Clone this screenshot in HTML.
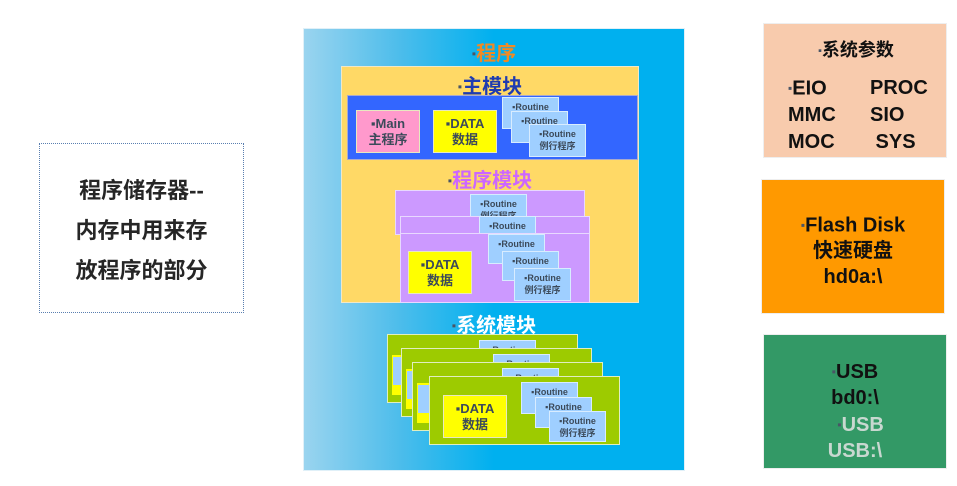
<!DOCTYPE html>
<html><head><meta charset="utf-8"><style>
body{margin:0;width:957px;height:486px;background:#fff;position:relative;overflow:hidden;font-family:"Liberation Sans","Noto Sans CJK SC",sans-serif;font-weight:bold}
.a{position:absolute;box-sizing:border-box}
.r{position:absolute;box-sizing:border-box;background:#9fcfff;border:1px solid #d8ecff;color:#3c4a5a;font-size:9px;line-height:12px;text-align:center;padding-top:3px;overflow:hidden}
.d{position:absolute;box-sizing:border-box;background:#ffff00;border:1px solid #e8e8c0;color:#3c4a5a;font-size:13px;line-height:16px;text-align:center;padding-top:5px}
.g{position:absolute;box-sizing:border-box;background:#9dcb00;border:1px solid #e0eec0}
.p{position:absolute;box-sizing:border-box;background:#cc99ff;border:1px solid #e8d8ff}
.c{text-align:center}
b{color:#4a5566;font-size:0.6em;vertical-align:0.2em}
</style></head><body>
<div class="a" style="left:39px;top:143px;width:205px;height:170px;border:1px dotted #5a7fb0"></div>
<div class="a c" style="left:39px;top:171px;width:205px;font-size:22px;line-height:40px;color:#262626">程序储存器--<br>内存中用来存<br>放程序的部分</div>

<div class="a" style="left:303px;top:28px;width:382px;height:443px;background:linear-gradient(90deg,#9ad4ef 0%,#4dbdeb 25%,#00b0ef 50%,#00b0ef 100%);border:1px solid #e0f0f8"></div>
<div class="a c" style="left:303px;top:37px;width:382px;font-size:20px;color:#f08a24"><b>▪</b>程序</div>
<div class="a" style="left:341px;top:66px;width:298px;height:237px;background:#ffd966;border:1px solid #f0e8c8"></div>
<div class="a c" style="left:341px;top:70px;width:298px;font-size:20px;color:#1f3bb0"><b>▪</b>主模块</div>
<div class="a" style="left:347px;top:95px;width:291px;height:65px;background:#3366ff;border:1px solid #aac"></div>
<div class="d" style="left:356px;top:110px;width:64px;height:43px;background:#ff99cc">▪Main<br>主程序</div>
<div class="d" style="left:433px;top:110px;width:64px;height:43px">▪DATA<br>数据</div>
<div class="r" style="left:502px;top:97px;width:57px;height:32px">▪Routine</div>
<div class="r" style="left:511px;top:111px;width:57px;height:32px">▪Routine<br>例</div>
<div class="r" style="left:529px;top:124px;width:57px;height:33px">▪Routine<br>例行程序</div>
<div class="a c" style="left:341px;top:164px;width:298px;font-size:20px;color:#cc66ff"><b>▪</b>程序模块</div>
<div class="p" style="left:395px;top:190px;width:190px;height:45px"></div>
<div class="r" style="left:470px;top:194px;width:57px;height:30px">▪Routine<br>例行程序</div>
<div class="p" style="left:400px;top:216px;width:190px;height:30px"></div>
<div class="r" style="left:479px;top:216px;width:57px;height:30px">▪Routine</div>
<div class="p" style="left:400px;top:233px;width:190px;height:70px"></div>
<div class="d" style="left:408px;top:251px;width:64px;height:43px">▪DATA<br>数据</div>
<div class="r" style="left:488px;top:234px;width:57px;height:30px">▪Routine<br>例</div>
<div class="r" style="left:502px;top:251px;width:57px;height:30px">▪Routine<br>例</div>
<div class="r" style="left:514px;top:268px;width:57px;height:33px">▪Routine<br>例行程序</div>
<div class="a c" style="left:303px;top:309px;width:382px;font-size:20px;color:#fff"><b>▪</b>系统模块</div>
<div class="g" style="left:387px;top:334px;width:191px;height:69px"><div class="a" style="left:4px;top:20px;width:28px;height:40px;background:#ffff00"></div><div class="a" style="left:5px;top:22px;width:20px;height:28px;background:#9fcfff"></div></div>
<div class="r" style="left:479px;top:340px;width:57px;height:20px">▪Routine</div>
<div class="g" style="left:401px;top:348px;width:191px;height:69px"><div class="a" style="left:4px;top:20px;width:28px;height:40px;background:#ffff00"></div><div class="a" style="left:5px;top:22px;width:20px;height:28px;background:#9fcfff"></div></div>
<div class="r" style="left:493px;top:354px;width:57px;height:20px">▪Routine</div>
<div class="g" style="left:412px;top:362px;width:191px;height:69px"><div class="a" style="left:4px;top:20px;width:28px;height:40px;background:#ffff00"></div><div class="a" style="left:5px;top:22px;width:20px;height:28px;background:#9fcfff"></div></div>
<div class="r" style="left:502px;top:368px;width:57px;height:20px">▪Routine</div>
<div class="g" style="left:429px;top:376px;width:191px;height:69px"></div>
<div class="d" style="left:443px;top:395px;width:64px;height:43px">▪DATA<br>数据</div>
<div class="r" style="left:521px;top:382px;width:57px;height:32px">▪Routine<br>例</div>
<div class="r" style="left:535px;top:397px;width:57px;height:31px">▪Routine<br>例</div>
<div class="r" style="left:549px;top:411px;width:57px;height:31px">▪Routine<br>例行程序</div>

<div class="a" style="left:763px;top:23px;width:184px;height:135px;background:#f8cbad;border:1px solid #eee;color:#111">
<div class="a c" style="left:0;top:12px;width:184px;font-size:18px"><b>▪</b>系统参数</div>
<div class="a" style="left:24px;top:51px;font-size:20px;line-height:27px"><b>▪</b>EIO<br>MMC<br>MOC</div>
<div class="a" style="left:106px;top:51px;font-size:20px;line-height:27px">PROC<br>SIO<br>&nbsp;SYS</div>
</div>
<div class="a c" style="left:761px;top:179px;width:184px;height:135px;background:#ff9900;border:1px solid #eee;color:#111;font-size:20px;line-height:26px;padding-top:32px"><b>▪</b>Flash Disk<br>快速硬盘<br>hd0a:\</div>
<div class="a c" style="left:763px;top:334px;width:184px;height:135px;background:#339966;border:1px solid #eee;font-size:20px;line-height:26px;padding-top:24px"><span style="color:#111"><b>▪</b>USB<br>bd0:\</span><br><span style="color:#c8d8d0">&nbsp;&nbsp;<b>▪</b>USB<br>USB:\</span></div>
</body></html>
